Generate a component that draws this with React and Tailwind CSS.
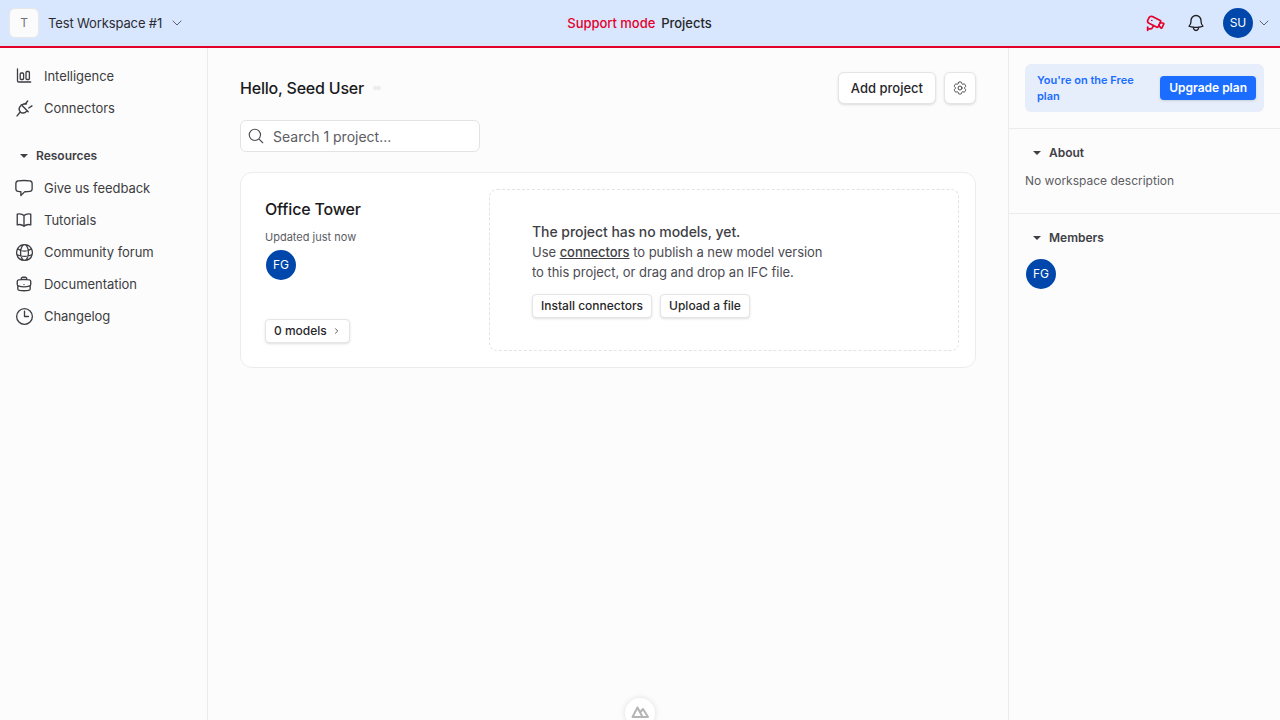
import { ChevronDown, ChevronRight, Cctv } from 'lucide-react';
import {
  HiOutlineBell,
  HiOutlineBookOpen,
  HiOutlineBriefcase,
  HiOutlineChatBubbleLeft,
  HiOutlineClock,
  HiOutlineCog6Tooth,
  HiOutlineGlobeAlt,
  HiOutlineMagnifyingGlass,
} from 'react-icons/hi2';

const IntelligenceIcon = () => (
  <svg viewBox="0 0 16 16" fill="none" stroke="currentColor" strokeWidth="1.3" className="w-4 h-4">
    <path d="M1.500 1v11.800c0 .7.5 1.200 1.200 1.200h12" strokeLinecap="round" />
    <rect x="4.200" y="5" width="3.400" height="6.500" rx="1" />
    <rect x="10" y="3.500" width="3.400" height="8" rx="1" />
  </svg>
);

const PlugIcon = () => (
  <svg viewBox="0 0 16 16" fill="none" stroke="currentColor" strokeWidth="1.3" strokeLinecap="round" strokeLinejoin="round" className="w-[17px] h-[17px] shrink-0">
    <path d="M5 4.500l6.500 6.500" />
    <path d="M4.500 5.500c-1.800 1.800-1.800 4.200-.4 5.700 1.500 1.500 4 1.400 5.700-.4" />
    <path d="M6 4.500c1.200-1 2.600-1.200 3.800-.8M1 15l2.800-3.500M8.500 4L11 1M12 7.500L15 5.500" />
  </svg>
);

const NavItem = ({ icon, label }) => (
  <a className="flex items-center h-8 pl-4 gap-3 text-[13px] leading-5 tracking-[-0.003em] text-[#3d3d42]">
    <span className="w-4 h-5 flex items-center justify-center text-[#3d3d42]">{icon}</span>
    <span>{label}</span>
  </a>
);

const SectionTitle = ({ label }) => (
  <div className="flex items-center gap-2 text-xs font-semibold text-[#3f3f46]">
    <span className="w-0 h-0 border-x-[4px] border-x-transparent border-t-[4px] border-t-[#3f3f46]" />
    {label}
  </div>
);

const Avatar = ({ initials }) => (
  <div className="w-[30px] h-[30px] rounded-full bg-[#0047ab] flex items-center justify-center text-xs text-white">
    {initials}
  </div>
);

const SmallButton = ({ children }) => (
  <button className="h-6 px-2 flex items-center bg-white border border-[#e5e5e5] rounded text-xs font-medium text-[#27272a] shadow-sm">
    {children}
  </button>
);

export default function App() {
  return (
    <div className="relative h-[720px] overflow-hidden flex flex-col bg-[#fcfcfc] text-[#1a1a1d] font-['Inter',sans-serif]">
      <header className="h-12 shrink-0 flex items-center justify-between bg-[#d9e7fe] border-b-2 border-[#e3002b] pl-[9px] pr-[10px]">
        <div className="w-[400px] flex items-center">
          <div className="w-[30px] h-[30px] rounded-md bg-[#fbfbfb] border border-[#e8e8e8] flex items-center justify-center text-xs text-[#71717a]">
            T
          </div>
          <span className="ml-[9px] text-[13px] leading-5 tracking-[-0.01em] text-[#2b2b33]">Test Workspace #1</span>
          <ChevronDown className="ml-[7px] w-4 h-4 text-[#4b4b52]" strokeWidth={1.3} />
        </div>
        <div className="flex items-center gap-[6px] text-[13px] leading-5 font-medium tracking-[-0.003em]">
          <span className="text-[#e3002b]">Support mode</span>
          <span className="text-[#26262b]">Projects</span>
        </div>
        <div className="w-[400px] flex items-center justify-end">
          <Cctv className="w-5 h-5 text-[#e3002b]" strokeWidth={2} />
          <HiOutlineBell className="ml-[20px] w-5 h-5 text-[#1f1f23] stroke-[1.6]" />
          <div className="ml-[17px] w-[30px] h-[30px] rounded-full bg-[#0047ab] flex items-center justify-center text-xs text-white">
            SU
          </div>
          <ChevronDown className="ml-[3px] -mr-[2px] w-4 h-4 text-[#4b4b52]" strokeWidth={1.3} />
        </div>
      </header>

      <div className="flex-1 flex min-h-0">
        <aside className="w-52 shrink-0 border-r border-[#ececec] pt-3">
          <NavItem icon={<IntelligenceIcon />} label="Intelligence" />
          <NavItem icon={<PlugIcon />} label="Connectors" />
          <div className="mt-4 pl-5 h-8 flex items-center">
            <SectionTitle label="Resources" />
          </div>
          <NavItem icon={<HiOutlineChatBubbleLeft className="w-5 h-5 shrink-0 stroke-[1.6]" />} label="Give us feedback" />
          <NavItem icon={<HiOutlineBookOpen className="w-[18px] h-[18px] shrink-0 stroke-[1.8]" />} label="Tutorials" />
          <NavItem icon={<HiOutlineGlobeAlt className="w-[21px] h-[21px] shrink-0 stroke-[1.5]" />} label="Community forum" />
          <NavItem icon={<HiOutlineBriefcase className="w-[18px] h-[18px] shrink-0 stroke-[1.8]" />} label="Documentation" />
          <NavItem icon={<HiOutlineClock className="w-[21px] h-[21px] shrink-0 stroke-[1.5]" />} label="Changelog" />
        </aside>

        <main className="flex-1 min-w-0 px-8 pt-6">
          <div className="flex items-center justify-between h-8">
            <div className="flex items-center gap-[9px]">
              <h1 className="text-base font-medium tracking-[-0.013em] text-[#1a1a1d]">Hello, Seed User</h1>
              <span className="w-2 h-1 rounded-full bg-[#ececec]" />
            </div>
            <div className="flex items-center gap-2">
              <button className="h-8 px-3 bg-white border border-[#e5e5e5] rounded-md text-[13px] leading-5 font-medium text-[#27272a] shadow-sm">
                Add project
              </button>
              <button className="w-8 h-8 flex items-center justify-center bg-white border border-[#e5e5e5] rounded-md shadow-sm">
                <HiOutlineCog6Tooth className="w-4 h-4 text-[#4b4b52]" />
              </button>
            </div>
          </div>

          <div className="mt-4 w-60 h-8 flex items-center bg-white border border-[#e3e3e3] rounded-md pl-[6px]">
            <HiOutlineMagnifyingGlass className="w-[18px] h-[18px] text-[#4b4b52]" />
            <span className="ml-2 pt-[2px] text-sm leading-5 text-[#5c5c63]">Search 1 project...</span>
          </div>

          <section className="mt-5 h-[196px] flex bg-white border border-[#ececec] rounded-xl pl-6 pr-4 pt-4 pb-6">
            <div className="w-[224px] shrink-0 flex flex-col">
              <h2 className="mt-2 text-base font-medium leading-6 tracking-[-0.011em] text-[#1a1a1d]">Office Tower</h2>
              <p className="mt-2 text-[11px] leading-4 text-[#5c5c63]">Updated just now</p>
              <div className="mt-[5px] ml-px">
                <Avatar initials="FG" />
              </div>
              <button className="mt-auto h-6 w-[85px] px-2 flex items-center gap-1 whitespace-nowrap bg-white border border-[#e5e5e5] rounded text-xs font-medium text-[#27272a] shadow-sm">
                0 models
                <ChevronRight className="w-3 h-3 ml-px text-[#3f3f46]" strokeWidth={2.25} />
              </button>
            </div>
            <div className="flex-1 -mb-2 border border-dashed border-[#e3e3e3] rounded-lg pl-[42px] pt-8">
              <p className="text-sm font-medium leading-5 tracking-[-0.004em] text-[#3f3f46]">The project has no models, yet.</p>
              <p className="mt-[1px] text-[13px] leading-[19.5px] tracking-[-0.003em] text-[#4b4b52]">
                Use <a className="font-medium underline text-[#3f3f46]">connectors</a> to publish a new model version
                <br />
                to this project, or drag and drop an IFC file.
              </p>
              <div className="mt-3 flex gap-2">
                <SmallButton>Install connectors</SmallButton>
                <SmallButton>Upload a file</SmallButton>
              </div>
            </div>
          </section>
        </main>

        <aside className="w-[272px] shrink-0 border-l border-[#ececec]">
          <div className="px-4 pt-4 pb-4 border-b border-[#ececec]">
            <div className="h-12 rounded-md bg-[#e6edfb] flex items-center justify-between pl-3 pr-2">
              <p className="w-[110px] text-[11px] leading-4 font-semibold text-[#1a6dff]">You're on the Free plan</p>
              <button className="h-6 px-[9px] bg-[#1a6dff] rounded text-xs font-semibold text-white shadow-sm">
                Upgrade plan
              </button>
            </div>
          </div>
          <div className="h-[85px] px-4 border-b border-[#ececec]">
            <div className="h-12 flex items-center pl-[8px]">
              <SectionTitle label="About" />
            </div>
            <p className="-mt-1 text-xs text-[#5c5c63]">No workspace description</p>
          </div>
          <div className="px-4">
            <div className="h-12 flex items-center pl-[8px]">
              <SectionTitle label="Members" />
            </div>
            <div className="-mt-[3px] ml-px">
              <Avatar initials="FG" />
            </div>
          </div>
        </aside>
      </div>

      <div className="absolute left-[625px] top-[698px] w-[30px] h-[30px] rounded-full bg-white shadow-[0_0_6px_rgba(0,0,0,0.12)] flex justify-center pt-2">
        <svg viewBox="0 0 18 12" fill="none" stroke="#b5b5b5" strokeWidth="2" strokeLinejoin="round" className="w-[18px] h-3">
          <path d="M1.500 11L6.500 1.500 11.500 11zM9.500 6L12 3 17 11h-5.500" />
        </svg>
      </div>
    </div>
  );
}
